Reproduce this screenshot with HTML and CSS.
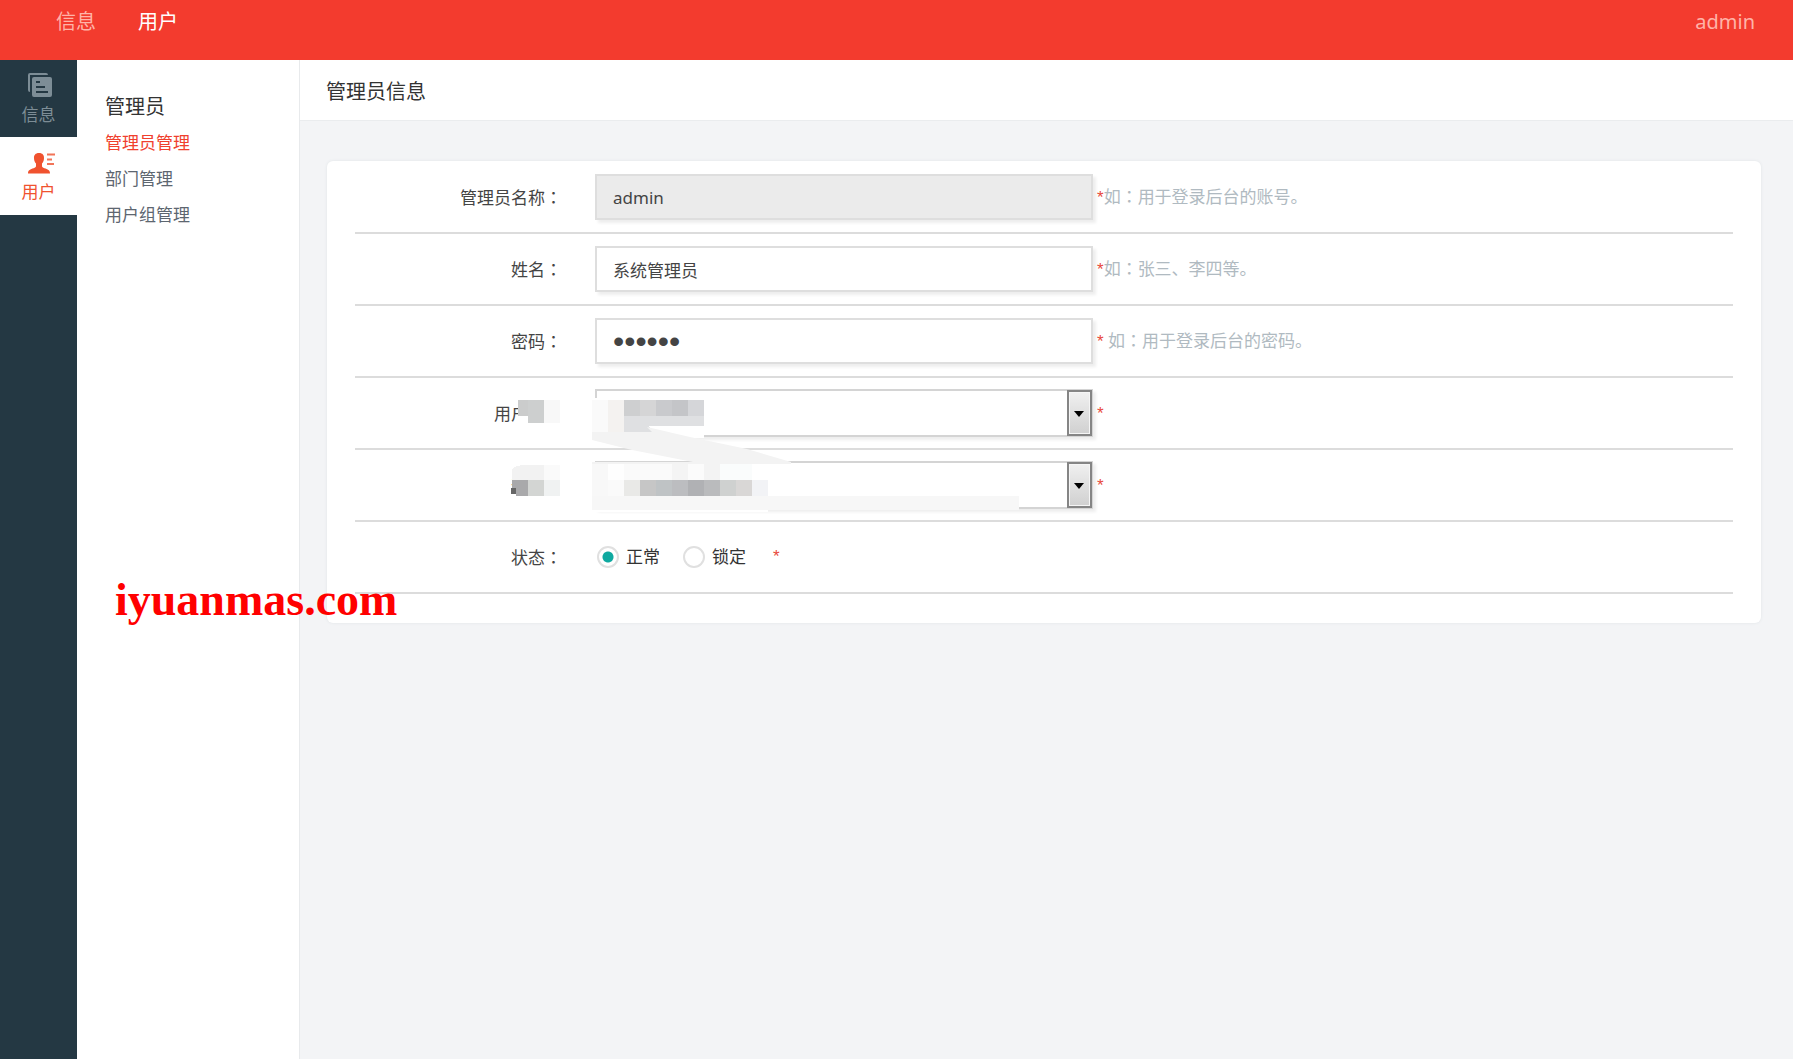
FILE: index.html
```html
<!DOCTYPE html>
<html lang="zh-CN">
<head>
<meta charset="utf-8">
<title>管理员信息</title>
<link rel="stylesheet" href="styles.css">
</head>
<body>
<header class="topbar">
  <nav class="topnav">
    <a href="#">信息</a>
    <a href="#" class="active">用户</a>
  </nav>
  <a href="#" class="account">admin</a>
</header>
<div class="layout">
  <nav class="rail">
    <a href="#">
      <svg width="24" height="24" viewBox="0 0 24 24" aria-hidden="true">
        <path d="M2 0H18a2 2 0 0 1 2 2H2V19a2 2 0 0 1-2-2V2a2 2 0 0 1 2-2z" fill="currentColor"/>
        <path fill-rule="evenodd" d="M6 4H22a2 2 0 0 1 2 2V22a2 2 0 0 1-2 2H6a2 2 0 0 1-2-2V6a2 2 0 0 1 2-2zM8 8v2h4V8zM8 13v2h9v-2zM8 18v2h12v-2z" fill="currentColor"/>
      </svg>
      <span>信息</span>
    </a>
    <a href="#" class="active">
      <svg class="user-icon" width="28" height="24" viewBox="0 0 28 24" aria-hidden="true">
        <path d="M11 3c3.600 0 5.200 2.200 5 5.200-.1 2.400-.8 4-2 5.400v2.400c0 1 .8 1.600 2.400 2.200 3.200 1 5.600 1.800 5.600 5.200H0c0-3.400 2.400-4.200 5.600-5.200C7.200 17.600 8 17 8 16v-2.400C6.800 12.200 6.100 10.600 6 8.200 5.800 5.200 7.400 3 11 3z" fill="currentColor"/>
        <path d="M19 4.500h8M19 9.500h5M19 14h7" stroke="currentColor" stroke-width="2" opacity=".8"/>
      </svg>
      <span>用户</span>
    </a>
  </nav>
  <aside class="sidebar">
    <h2>管理员</h2>
    <ul>
      <li><a href="#" class="active">管理员管理</a></li>
      <li><a href="#">部门管理</a></li>
      <li><a href="#">用户组管理</a></li>
    </ul>
  </aside>
  <main>
    <h1>管理员信息</h1>
    <form class="card">
      <div class="row">
        <label for="account">管理员名称<span class="colon">：</span></label>
        <input class="field" id="account" type="text" value="admin" readonly>
        <p class="hint"><b>*</b>如<span class="colon">：</span>用于登录后台的账号。</p>
      </div>
      <div class="row">
        <label for="name">姓名<span class="colon">：</span></label>
        <input class="field" id="name" type="text" value="系统管理员">
        <p class="hint"><b>*</b>如<span class="colon">：</span>张三、李四等。</p>
      </div>
      <div class="row">
        <label for="pwd">密码<span class="colon">：</span></label>
        <input class="field password" id="pwd" type="password" value="123456">
        <p class="hint"><b>*</b> 如<span class="colon">：</span>用于登录后台的密码。</p>
      </div>
      <div class="row">
        <label for="group">用户组<span class="colon">：</span></label>
        <div class="select"><select id="group"><option></option></select></div>
        <p class="hint"><b>*</b></p>
      </div>
      <div class="row">
        <label for="dept">部门<span class="colon">：</span></label>
        <div class="select"><select id="dept"><option></option></select></div>
        <p class="hint"><b>*</b></p>
      </div>
      <div class="row" role="radiogroup" aria-labelledby="state">
        <span class="label" id="state">状态<span class="colon">：</span></span>
        <div class="options">
          <label><input type="radio" name="state" checked>正常</label>
          <label><input type="radio" name="state">锁定</label>
          <b>*</b>
        </div>
      </div>
      <svg class="redaction" width="560" height="130" viewBox="490 390 560 130" shape-rendering="crispEdges" aria-hidden="true">
        <path d="M518 398h46v30h-46zM592 398h112v40H592zM512 464h52v34h-52zM592 464h176v48H592z" fill="#fff"/>
        <path d="M518 400h10v16h-10z" fill="#cbcccc"/>
        <path d="M528 400h16v23h-16z" fill="#cdcfcf"/>
        <path d="M544 400h16v23h-16z" fill="#f8f8f8"/>
        <path d="M592 400h16v34h-16z" fill="#fafafa"/>
        <path d="M608 400h16v32h-16z" fill="#f4f2f0"/>
        <path d="M624 400h16v16h-16z" fill="#cecfd0"/>
        <path d="M640 400h16v16h-16z" fill="#d5d5d6"/>
        <path d="M656 400h16v16h-16z" fill="#c9cacd"/>
        <path d="M672 400h16v16h-16z" fill="#c4c5c8"/>
        <path d="M688 400h16v16h-16z" fill="#d5d6d9"/>
        <path d="M624 416h80v10h-56l8 6h-32z" fill="#dfe0e2"/>
        <path d="M592 432h60l-5-5 43 10 57 12 44 13v2H592v-2h101l-61-12-40-10z" fill="#f3f3f3" shape-rendering="auto"/>
        <path d="M512 480v-11q4-4 14-4h18v15z" fill="#f2f2f2"/>
        <path d="M544 465h16v15h-16z" fill="#fafafa"/>
        <path d="M511 488h5v6h-5z" fill="#666"/>
        <path d="M516 480h12v16h-12zM512 480h4v8h-4z" fill="#a9a9ab"/>
        <path d="M528 480h16v16h-16z" fill="#d3d5d3"/>
        <path d="M544 480h16v16h-16z" fill="#f0f2f2"/>
        <path d="M592 464h16v32h-16z" fill="#f8f8f8"/>
        <path d="M608 464h16v16h-16z" fill="#fefefe"/>
        <path d="M624 464h48v16h-48z" fill="#fafafa"/>
        <path d="M672 464h16v16h-16z" fill="#f4f4f4"/>
        <path d="M688 464h16v16h-16z" fill="#fbfbfb"/>
        <path d="M704 464h16v16h-16z" fill="#f3f3f3"/>
        <path d="M720 464h32v16h-32z" fill="#fafcfc"/>
        <path d="M608 480h16v16h-16z" fill="#fafafa"/>
        <path d="M624 480h16v16h-16z" fill="#e9e9e7"/>
        <path d="M640 480h16v16h-16z" fill="#c6c6c6"/>
        <path d="M656 480h16v16h-16z" fill="#bfc3c5"/>
        <path d="M672 480h16v16h-16z" fill="#bcbdc0"/>
        <path d="M688 480h16v16h-16z" fill="#b0b1b4"/>
        <path d="M704 480h16v16h-16z" fill="#babbbd"/>
        <path d="M720 480h16v16h-16z" fill="#cfd1d0"/>
        <path d="M736 480h16v16h-16z" fill="#d9d7d6"/>
        <path d="M752 480h16v16h-16z" fill="#f2f3f6"/>
        <path d="M592 496h427v14H592z" fill="#f7f7f7"/>
      </svg>
    </form>
  </main>
</div>
<div class="watermark">iyuanmas.com</div>
</body>
</html>
```
FILE: styles.css
```css
*, ::before, ::after {
  box-sizing: border-box;
}

body {
  margin: 0;
  min-height: 100vh;
  display: flex;
  flex-direction: column;
  font: 17px/24px "Noto Sans", "Noto Sans CJK SC", sans-serif;
  color: #444;
  background: #f3f4f6;
}

a {
  color: inherit;
  text-decoration: none;
}

h1, h2, p, ul {
  margin: 0;
  padding: 0;
  font-weight: 400;
  list-style: none;
}

/* Full-width colon centred in its cell */
.colon {
  font-family: "Noto Sans CJK TC", sans-serif;
  font-feature-settings: "locl" 0;
}

.topbar {
  display: flex;
  justify-content: space-between;
  height: 60px;
  padding: 8px 38px 0 56px;
  font-size: 20px;
  line-height: 28px;
  color: #ffb3a8;
  background: #f33b2e;
}

.topnav {
  display: flex;
  gap: 42px;
}

.topnav .active {
  color: #fff;
}

.layout {
  flex: 1;
  display: flex;
}

.rail {
  width: 77px;
  background: #243843;
  color: #7d8d96;
}

.rail a {
  display: flex;
  flex-direction: column;
  align-items: center;
  gap: 6px;
  height: 77px;
  padding-top: 13px;
}

.rail .active {
  color: #f0522f;
  background: #fff;
  height: 78px;
}

.rail svg {
  margin-left: 2px;
}

.rail .user-icon {
  margin-left: 6px;
}

.sidebar {
  width: 222px;
  padding: 32px 28px;
  background: #fff;
}

.sidebar h2 {
  font-size: 20px;
  line-height: 30px;
  color: #333;
}

.sidebar ul {
  padding-top: 3px;
}

.sidebar li {
  line-height: 36px;
  color: #5d6670;
}

.sidebar .active {
  color: #f0402e;
}

main {
  flex: 1;
  min-width: 0;
  border-left: 1px solid #e8eaec;
}

h1 {
  height: 61px;
  padding: 17px 26px;
  font-size: 20px;
  line-height: 30px;
  color: #333;
  background: #fff;
  border-bottom: 1px solid #eaecee;
}

.card {
  position: relative;
  margin: 40px 32px 0 27px;
  padding: 1px 28px 29px;
  background: #fff;
  border-radius: 6px;
  box-shadow: 0 0 3px #dfe3e6;
}

.row {
  display: grid;
  grid-template-columns: 207px 498px 1fr;
  align-items: center;
  height: 72px;
  border-bottom: 2px solid #dcdcdc;
}

.row > label, .row > .label {
  text-align: right;
}

.row > :nth-child(2) {
  margin-left: 33px;
  margin-right: -33px;
}

.row > .hint {
  padding-left: 37px;
  color: #b0bac1;
}

b {
  font-family: "Liberation Sans", sans-serif;
  font-weight: 400;
  color: #e8483c;
}

.field {
  height: 46px;
  padding: 0 16px;
  font: inherit;
  color: #444;
  background: #fff;
  border: 2px solid #dedede;
  border-radius: 0;
  box-shadow: 3px 3px 3px #eee;
}

.field:read-only {
  background: #ebebeb;
}

.password {
  font-family: "Liberation Sans", sans-serif;
  font-size: 32px;
}

.select {
  position: relative;
  height: 48px;
  box-shadow: 3px 3px 3px #eee;
}

.select select {
  width: 100%;
  height: 48px;
  padding: 0 16px;
  font: inherit;
  appearance: none;
  background: #fff;
  border: 2px solid #d4d4d4;
  border-radius: 0;
}

.select::before {
  content: "";
  position: absolute;
  top: 1px;
  right: 1px;
  width: 25px;
  height: 46px;
  border: 2px solid #858585;
  background: linear-gradient(#f0f0f0, #d0d0d0);
  box-shadow: inset 0 0 0 1px #f5f5f5;
  pointer-events: none;
}

.select::after {
  content: "";
  position: absolute;
  top: 22px;
  right: 9px;
  border: solid transparent;
  border-width: 6px 5px 0;
  border-top-color: #000;
  pointer-events: none;
}

.options {
  display: flex;
  align-items: center;
  gap: 23px;
  padding-left: 2px;
}

.options label {
  display: flex;
  align-items: center;
  gap: 7px;
  color: #333;
}

.options b {
  padding-left: 4px;
}

.options input {
  appearance: none;
  width: 22px;
  height: 22px;
  margin: 0;
  border: 2px solid #e0e0e0;
  border-radius: 50%;
  background: #fff;
}

.options input:checked {
  background: radial-gradient(circle, #0fa9a0 5px, #fff 6px);
}

.redaction {
  position: absolute;
  left: 163px;
  top: 229px;
  pointer-events: none;
}

.watermark {
  position: absolute;
  left: 115px;
  top: 574px;
  font: bold 46px/52px "Liberation Serif", serif;
  color: #f00;
}
```
